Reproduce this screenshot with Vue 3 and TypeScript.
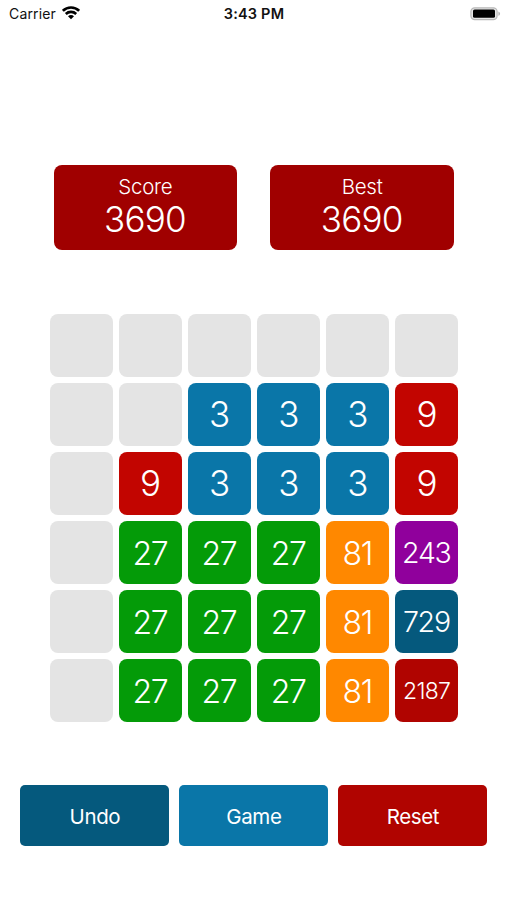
<script setup lang="ts">
interface Stat {
  label: string
  value: number
}

interface Action {
  label: string
  tone: string
}

const stats: Stat[] = [
  { label: 'Score', value: 3690 },
  { label: 'Best', value: 3690 },
]

const board: number[][] = [
  [0, 0, 0, 0, 0, 0],
  [0, 0, 3, 3, 3, 9],
  [0, 9, 3, 3, 3, 9],
  [0, 27, 27, 27, 81, 243],
  [0, 27, 27, 27, 81, 729],
  [0, 27, 27, 27, 81, 2187],
]

const actions: Action[] = [
  { label: 'Undo', tone: 'navy' },
  { label: 'Game', tone: 'blue' },
  { label: 'Reset', tone: 'red' },
]

const tileClass = (value: number): string[] =>
  value === 0 ? ['empty'] : [`v${value}`, `digits${String(value).length}`]
</script>

<template>
  <div class="screen">
    <header class="status">
      <div class="carrier">
        <span class="carrier-name">Carrier</span>
        <svg class="wifi" viewBox="0 0 18 14" width="18" height="14">
          <g fill="none" stroke="#000" stroke-width="2.6">
            <path d="M0.9 4.8C5.4 0.4 12.6 0.4 17.1 4.8" />
            <path d="M3.8 8C6.7 5.2 11.3 5.2 14.2 8" />
          </g>
          <path d="M6 10.3C7.7 8.7 10.3 8.7 12 10.3L9 13.3Z" />
        </svg>
      </div>
      <time class="clock">3:43 PM</time>
      <svg class="battery" viewBox="0 0 31 14" width="31" height="14">
        <rect x="0.9" y="0.8" width="26.2" height="11.8" rx="3.8" fill="#e6e6e6" stroke="#b8b8b8" stroke-width="1.2" />
        <rect x="3" y="2.4" width="22" height="8.4" rx="1.6" />
        <path d="M28.4 4.4C30.6 5.2 30.6 8 28.4 8.8Z" fill="#b4b4b4" />
      </svg>
    </header>

    <section class="stats">
      <div v-for="stat in stats" :key="stat.label" class="stat">
        <span class="stat-label">{{ stat.label }}</span>
        <span class="stat-value">{{ stat.value }}</span>
      </div>
    </section>

    <main class="board">
      <template v-for="(row, r) in board" :key="r">
        <div v-for="(value, c) in row" :key="c" class="tile" :class="tileClass(value)">
          <span v-if="value">{{ value }}</span>
        </div>
      </template>
    </main>

    <nav class="actions">
      <button v-for="action in actions" :key="action.label" type="button" class="action" :class="action.tone">
        {{ action.label }}
      </button>
    </nav>
  </div>
</template>

<style>
body {
  margin: 0;
  background: #fff;
}
</style>

<style scoped>
.screen {
  box-sizing: border-box;
  width: 507px;
  height: 900px;
  display: flex;
  flex-direction: column;
  background: #fff;
  font-family: Inter, "Liberation Sans", sans-serif;
  color: #fff;
}

.status {
  box-sizing: border-box;
  height: 27px;
  padding: 0 6px 0 9px;
  display: grid;
  grid-template-columns: 1fr auto 1fr;
  align-items: center;
  color: #111;
  font-size: 14px;
  line-height: 20px;
}

.carrier {
  display: flex;
  align-items: center;
  gap: 6px;
}

.carrier-name {
  letter-spacing: 0.15px;
}

.wifi {
  margin-top: -1px;
}

.clock {
  margin-right: 2px;
  font-size: 14.5px;
  font-weight: 600;
  letter-spacing: 0.2px;
}

.battery {
  justify-self: end;
}

.stats {
  margin: 138px 53px 0 53.5px;
  display: grid;
  grid-template-columns: 1fr 1fr;
  gap: 33px;
}

.stat {
  box-sizing: border-box;
  height: 85px;
  padding-top: 10px;
  border-radius: 8px;
  background: #a00000;
  display: flex;
  flex-direction: column;
  align-items: center;
}

.stat-label {
  font-size: 20.5px;
  line-height: 24px;
  font-weight: 300;
  letter-spacing: -0.25px;
}

.stat-value {
  font-size: 35px;
  line-height: 41px;
  font-weight: 300;
  letter-spacing: -0.8px;
  text-indent: -0.8px;
}

.board {
  margin: 64px 0 0 50px;
  display: grid;
  grid-template-columns: repeat(6, 63px);
  grid-auto-rows: 63px;
  gap: 6.1px;
}

.tile {
  box-sizing: border-box;
  border-radius: 8px;
  display: flex;
  align-items: center;
  justify-content: center;
  font-weight: 300;
  line-height: 1;
}

.empty { background: #e4e4e4; }
.v3 { background: #0a76a8; }
.v9 { background: #c20500; }
.v27 { background: #049b08; }
.v81 { background: #ff8800; }
.v243 { background: #90009c; }
.v729 { background: #05597d; }
.v2187 { background: #b00400; }

.digits1 { font-size: 35px; }
.digits2 { padding-top: 2px; font-size: 32px; letter-spacing: -1.4px; text-indent: -1.4px; }
.digits3 { font-size: 28.5px; letter-spacing: -1.2px; text-indent: -1.2px; }
.digits4 { padding-top: 2px; font-size: 23px; letter-spacing: -0.7px; text-indent: -0.7px; }

.actions {
  margin: 63px 19.6px 0 20.4px;
  display: grid;
  grid-template-columns: repeat(3, 1fr);
  gap: 10px;
}

.action {
  height: 61px;
  padding: 2px 0 0;
  border: 0;
  border-radius: 5px;
  color: #fff;
  font: 400 20.5px/24px Inter, "Liberation Sans", sans-serif;
  letter-spacing: -0.4px;
}

.navy { background: #05597d; }
.blue { background: #0a76a8; }
.red { background: #b00400; }
</style>
